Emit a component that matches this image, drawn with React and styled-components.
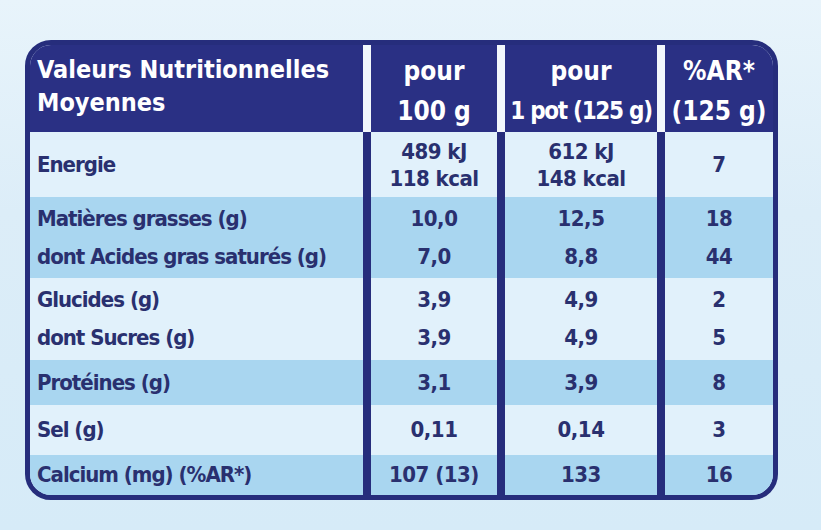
import React from 'react';
import styled, { createGlobalStyle } from 'styled-components';

const GlobalStyle = createGlobalStyle`
  html, body {
    margin: 0;
    padding: 0;
  }
  body {
    font-family: "Liberation Sans Narrow", "DejaVu Sans Condensed", "Liberation Sans", sans-serif;
  }
`;

const rows = [
  { tone: 'light', height: 65, lh: 27, label: ['Energie'], a: ['489 kJ', '118 kcal'], b: ['612 kJ', '148 kcal'], c: ['7'] },
  { tone: 'dark', height: 81, lh: 38, label: ['Matières grasses (g)', 'dont Acides gras saturés (g)'], a: ['10,0', '7,0'], b: ['12,5', '8,8'], c: ['18', '44'] },
  { tone: 'light', height: 82, lh: 38, label: ['Glucides (g)', 'dont Sucres (g)'], a: ['3,9', '3,9'], b: ['4,9', '4,9'], c: ['2', '5'] },
  { tone: 'dark', height: 45, lh: 38, label: ['Protéines (g)'], a: ['3,1'], b: ['3,9'], c: ['8'] },
  { tone: 'light', height: 50, lh: 38, label: ['Sel (g)'], a: ['0,11'], b: ['0,14'], c: ['3'] },
  { tone: 'dark', height: 40, lh: 36, label: ['Calcium (mg) (%AR*)'], a: ['107 (13)'], b: ['133'], c: ['16'] },
];

const App = () => {
  return (
    <>
      <GlobalStyle />
      <Page>
        <Table>
          <HeadRow>
            <HeadLabel>
              <span>Valeurs Nutritionnelles</span>
              <span>Moyennes</span>
            </HeadLabel>
            <HeadCell>
              <span>pour</span>
              <span>100 g</span>
            </HeadCell>
            <HeadCell $narrow>
              <span>pour</span>
              <span>1 pot (125 g)</span>
            </HeadCell>
            <HeadCell>
              <span>%AR*</span>
              <span>(125 g)</span>
            </HeadCell>
          </HeadRow>
          {rows.map((r, i) => (
            <Row key={i} $tone={r.tone} style={{ height: r.height }}>
              <LabelCell $lh={r.lh}>
                {r.label.map((t) => <span key={t}>{t}</span>)}
              </LabelCell>
              <ValueCell $lh={r.lh}>
                {r.a.map((t, j) => <span key={j}>{t}</span>)}
              </ValueCell>
              <ValueCell $lh={r.lh}>
                {r.b.map((t, j) => <span key={j}>{t}</span>)}
              </ValueCell>
              <ValueCell $lh={r.lh}>
                {r.c.map((t, j) => <span key={j}>{t}</span>)}
              </ValueCell>
            </Row>
          ))}
        </Table>
      </Page>
    </>
  );
};

export default App;

const Page = styled.div`
  width: 821px;
  height: 530px;
  box-sizing: border-box;
  padding: 40px 0 0 25px;
  background: linear-gradient(180deg, #e8f4fb 0%, #dcedf8 40%, #d6ebf8 100%);
  overflow: hidden;
`;

const Table = styled.div`
  width: 753px;
  box-sizing: border-box;
  border: 5px solid #262d7c;
  border-radius: 26px;
  overflow: hidden;
  color: #29306f;
`;

const cols = `333px 134px 160px 1fr`;

const HeadRow = styled.div`
  display: grid;
  grid-template-columns: ${cols};
  height: 87px;
  background: #2a3084;
  color: #ffffff;
`;

const HeadLabel = styled.div`
  display: flex;
  flex-direction: column;
  padding: 8px 0 0 7px;
  font-size: 25px;
  font-weight: bold;
  line-height: 33px;
  letter-spacing: 0;
`;

const HeadCell = styled.div`
  display: flex;
  flex-direction: column;
  align-items: center;
  padding-top: 6px;
  border-left: 8px solid #f2f7fc;
  font-size: ${(p) => (p.$narrow ? '24px' : '26px')};
  font-weight: bold;
  line-height: 40px;
  white-space: nowrap;
  letter-spacing: ${(p) => (p.$narrow ? '-1.3px' : '0')};
  span:first-child {
    font-size: 26px;
    letter-spacing: 0;
  }
`;

const Row = styled.div`
  display: grid;
  grid-template-columns: ${cols};
  background: ${(p) => (p.$tone === 'dark' ? '#a9d6f0' : '#e1f1fb')};
`;

const LabelCell = styled.div`
  display: flex;
  flex-direction: column;
  justify-content: center;
  padding-left: 7px;
  font-size: 22px;
  font-weight: bold;
  line-height: ${(p) => p.$lh}px;
  letter-spacing: -1px;
  white-space: nowrap;
`;

const ValueCell = styled.div`
  display: flex;
  flex-direction: column;
  justify-content: center;
  align-items: center;
  border-left: 8px solid #262d7c;
  font-size: 22px;
  font-weight: bold;
  line-height: ${(p) => p.$lh}px;
  letter-spacing: -0.5px;
  white-space: nowrap;
`;
